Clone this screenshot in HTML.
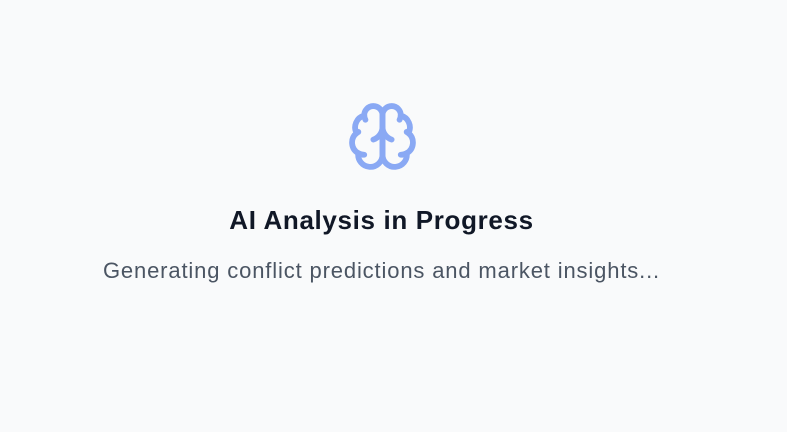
<!DOCTYPE html>
<html><head><style>
html,body{margin:0;padding:0;width:787px;height:432px;background:#f9fafb;overflow:hidden}
body{font-family:"Liberation Sans",sans-serif;position:relative}
svg{position:absolute;left:346px;top:100px}
h2{position:absolute;left:0;width:763px;top:203px;margin:0;text-align:center;font-size:26px;letter-spacing:0.65px;font-weight:bold;color:#111827;line-height:34px}
p{position:absolute;left:0;width:763px;top:256px;margin:0;text-align:center;font-size:22px;letter-spacing:0.85px;color:#4b5563;line-height:30px}
</style></head><body>
<svg width="73" height="73" viewBox="0 0 24 24" fill="none" stroke="#8aa9f4" stroke-width="1.9" stroke-linecap="round" stroke-linejoin="round">
<path d="M12 5a3 3 0 1 0-5.997.125 4 4 0 0 0-2.526 5.77 4 4 0 0 0 .556 6.588A4 4 0 1 0 12 18Z"/>
<path d="M12 5a3 3 0 1 1 5.997.125 4 4 0 0 1 2.526 5.77 4 4 0 0 1-.556 6.588A4 4 0 1 1 12 18Z"/>
<path d="M15 13a4.5 4.5 0 0 1-3-4 4.5 4.5 0 0 1-3 4"/>
<path d="M12 9v9"/>
<path d="M17.599 6.5a3 3 0 0 0 .399-1.375"/>
<path d="M6.003 5.125A3 3 0 0 0 6.401 6.5"/>
<path d="M3.477 10.896a4 4 0 0 1 .585-.396"/>
<path d="M19.938 10.5a4 4 0 0 1 .585.396"/>
<path d="M6 18a4 4 0 0 1-1.967-.516"/>
<path d="M19.967 17.484A4 4 0 0 1 18 18"/>
</svg>
<h2>AI Analysis in Progress</h2>
<p>Generating conflict predictions and market insights...</p>
</body></html>
